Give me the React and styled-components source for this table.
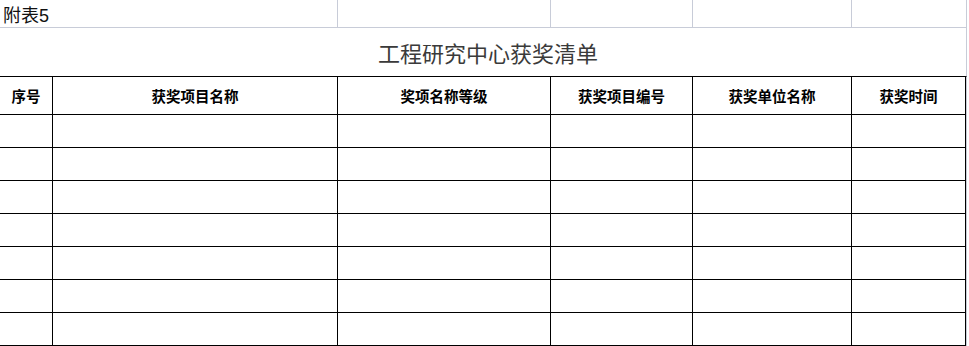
import React from "react";
import styled, { createGlobalStyle } from "styled-components";

const GlobalStyle = createGlobalStyle`
    html, body { margin:0; padding:0; background:#fff; }
    body { font-family: "Liberation Sans", "Noto Sans CJK SC", sans-serif; }
`;

const Sheet = styled.div`
    width:967px;
    background:#fff;
`;

const TopRow = styled.div`
    display:grid;
    grid-template-columns: 338px 213px 142px 159px 115px;
    height:28px;
    border-bottom:1px solid #c8ccd8;
    box-sizing:border-box;
`;

const GridCell = styled.div`
    border-right:1px solid #c8ccd8;
    display:flex;
    align-items:center;
    padding-left:${p => p.$pad || 0}px;
    font-size:18px;
    color:#111;
    font-family: "Liberation Sans", "Noto Sans CJK SC", sans-serif;
`;

const TitleRow = styled.div`
    height:48px;
    display:flex;
    align-items:center;
    justify-content:center;
    border-right:1px solid #c8ccd8;
    font-family: "Noto Sans CJK SC", sans-serif;
    font-size:22px;
    color:#3a3a3a;
    padding-left:10px;
`;

const Table = styled.div`
    width:966px;
    display:grid;
    grid-template-columns: 53px 285px 213px 142px 159px 114px;
    border-top:1px solid #000;
    border-right:1px solid #c8ccd8;
`;

const Cell = styled.div`
    box-sizing:border-box;
    height:${p => p.$head ? 38 : 33}px;
    border-right:1px solid #000;
    border-bottom:1px solid #000;
    display:flex;
    align-items:center;
    justify-content:center;
    font-family: "Noto Sans CJK SC", sans-serif;
    font-weight:bold;
    font-size:14.5px;
    color:#000;
`;

const headers = ["序号", "获奖项目名称", "奖项名称等级", "获奖项目编号", "获奖单位名称", "获奖时间"];
const rows = 7;

const App = () => {
    return (
        <Sheet>
            <GlobalStyle />
            <TopRow>
                <GridCell $pad={3}>附表5</GridCell>
                <GridCell />
                <GridCell />
                <GridCell />
                <GridCell />
            </TopRow>
            <TitleRow>工程研究中心获奖清单</TitleRow>
            <Table>
                {headers.map(h => <Cell $head key={h}>{h}</Cell>)}
                {Array.from({ length: rows }).map((_, r) =>
                    headers.map(h => <Cell key={r + h} />)
                )}
            </Table>
        </Sheet>
    );
};

export default App;
